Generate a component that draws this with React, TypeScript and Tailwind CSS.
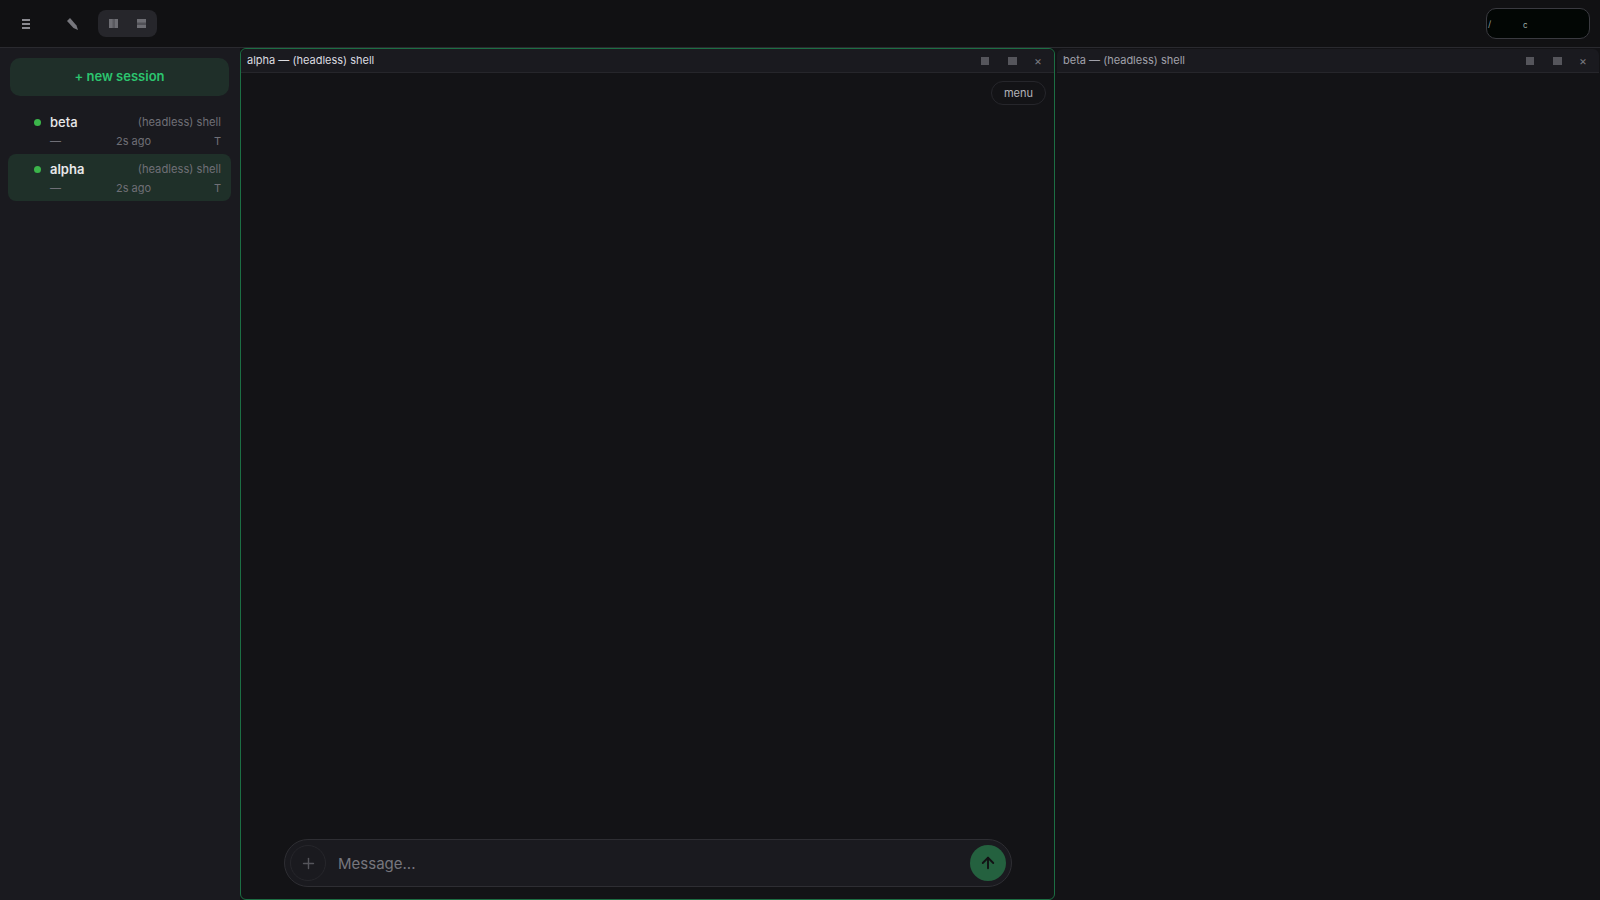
import { ArrowUp, Plus } from "lucide-react";

function SplitIcon({ dir }: { dir: "v" | "h" }) {
  return (
    <svg width="9" height="9" viewBox="0 0 9 9" className="block">
      <rect width="9" height="9" fill="#6e6e74" />
      {dir === "v" ? (
        <rect x="3.5" width="2.5" height="9" fill="#5a5a60" />
      ) : (
        <rect y="3.5" width="9" height="2.5" fill="#505056" />
      )}
    </svg>
  );
}

function PaneHeader({ title, active }: { title: string; active?: boolean }) {
  return (
    <div className="flex h-[24px] shrink-0 items-center justify-between rounded-t-[6px] border-b border-[#26262b] bg-[#1a1a1f]">
      <span className={`pl-[6px] text-[11px] ${active ? "text-[#dcdce0]" : "text-[#a1a1aa]"}`}>
        {title}
      </span>
      <div className="flex items-center pr-[12px] pt-[1px]">
        <div className="h-[8px] w-[8px] bg-[#55555b]" />
        <div className="ml-[19px] h-[8px] w-[9px] bg-[#55555b]" />
        <span className="ml-[17px] w-[8px] text-center text-[12px] leading-none text-[#77777d]">×</span>
      </div>
    </div>
  );
}

function SessionRow({ name, active }: { name: string; active?: boolean }) {
  return (
    <div className={`ml-[8px] mr-[9px] h-[47px] rounded-[8px] pl-[26px] pr-[10px] pt-[4px] ${active ? "bg-[#1f3029]" : ""}`}>
      <div className="flex h-[22px] items-center">
        <div className="h-[7px] w-[7px] rounded-full bg-[#3bb54a]" />
        <span className={`ml-[9px] mt-[2px] text-[13px] text-[#e8e8ea] ${active ? "font-semibold" : "font-medium"}`}>{name}</span>
        <span className="ml-auto text-[11.2px] text-[#6f6f76]">(headless) shell</span>
      </div>
      <div className="flex h-[17px] items-center pl-[16px] text-[11px] text-[#6f6f76]">
        <span className="w-[66px]">—</span>
        <span>2s ago</span>
        <span className="ml-auto">T</span>
      </div>
    </div>
  );
}

export default function App() {
  return (
    <div className="flex h-[900px] w-[1600px] flex-col overflow-hidden bg-[#131316] font-['Inter',sans-serif]">
      {/* top bar */}
      <div className="flex h-[48px] shrink-0 items-center border-b border-[#2a2a2f] bg-[#111113] pr-[10px]">
        <svg width="8" height="10" viewBox="0 0 8 10" className="ml-[22px] block">
          <rect y="0" width="8" height="2" fill="#8a8a90" />
          <rect y="4" width="8" height="2" fill="#8a8a90" />
          <rect y="8" width="8" height="2" fill="#8a8a90" />
        </svg>
        <svg width="11" height="12" viewBox="0 0 11 12" className="ml-[37px] block">
          <path d="M0 3 L3 0 L9.5 7.5 L11 12 L6.5 10 Z" fill="#77777d" />
        </svg>
        <div className="ml-[20px] flex h-[27px] w-[59px] items-center justify-between rounded-[8px] bg-[#26262b] px-[11px]">
          <SplitIcon dir="v" />
          <SplitIcon dir="h" />
        </div>
        <div className="relative ml-auto h-[31px] w-[104px] overflow-hidden rounded-[10px] border border-[#3a3a40] bg-[#020604]">
          <span className="absolute left-[1px] top-[10px] text-[9px] leading-none text-[#8f9a94]">/</span>
          <span className="absolute left-[36px] top-[12px] text-[8px] leading-none text-[#a0b0a8]">c</span>
        </div>
      </div>

      <div className="flex min-h-0 flex-1">
        {/* sidebar */}
        <div className="flex w-[240px] shrink-0 flex-col bg-[#1a1a1f]">
          <button className="ml-[10px] mr-[11px] mt-[10px] h-[38px] rounded-[10px] bg-[#1f2f29] text-[13px] font-semibold text-[#2cc56f]">
            + new session
          </button>
          <div className="mt-[11px]">
            <SessionRow name="beta" />
            <SessionRow name="alpha" active />
          </div>
        </div>

        {/* alpha pane */}
        <div className="flex w-[815px] shrink-0 flex-col rounded-[6px] border border-[#1c6e43] bg-[#131316]">
          <PaneHeader title="alpha — (headless) shell" active />
          <div className="flex flex-1 flex-col px-[8px] pb-[12px]">
            <div className="flex justify-end pt-[8px]">
              <div className="flex h-[24px] w-[55px] items-center justify-center rounded-full border border-[#26262b] text-[11px] text-[#b4b4ba]">
                menu
              </div>
            </div>
            <div className="ml-[35px] mr-[34px] mt-auto flex h-[48px] items-center rounded-full border border-[#2e2e33] bg-[#1a1a1f] px-[5px]">
              <div className="flex h-[36px] w-[36px] items-center justify-center rounded-full border border-[#26262b] text-[#55555b]">
                <Plus size={17} strokeWidth={2} />
              </div>
              <span className="ml-[12px] mt-[2px] text-[15px] text-[#76767d]">Message...</span>
              <div className="ml-auto flex h-[36px] w-[36px] items-center justify-center rounded-full bg-[#24613f] text-[#121214]">
                <ArrowUp size={18} strokeWidth={2.5} />
              </div>
            </div>
          </div>
        </div>

        {/* beta pane */}
        <div className="flex min-w-0 flex-1 flex-col border border-transparent pl-px">
          <PaneHeader title="beta — (headless) shell" />
          <div className="flex-1" />
        </div>
      </div>
    </div>
  );
}
